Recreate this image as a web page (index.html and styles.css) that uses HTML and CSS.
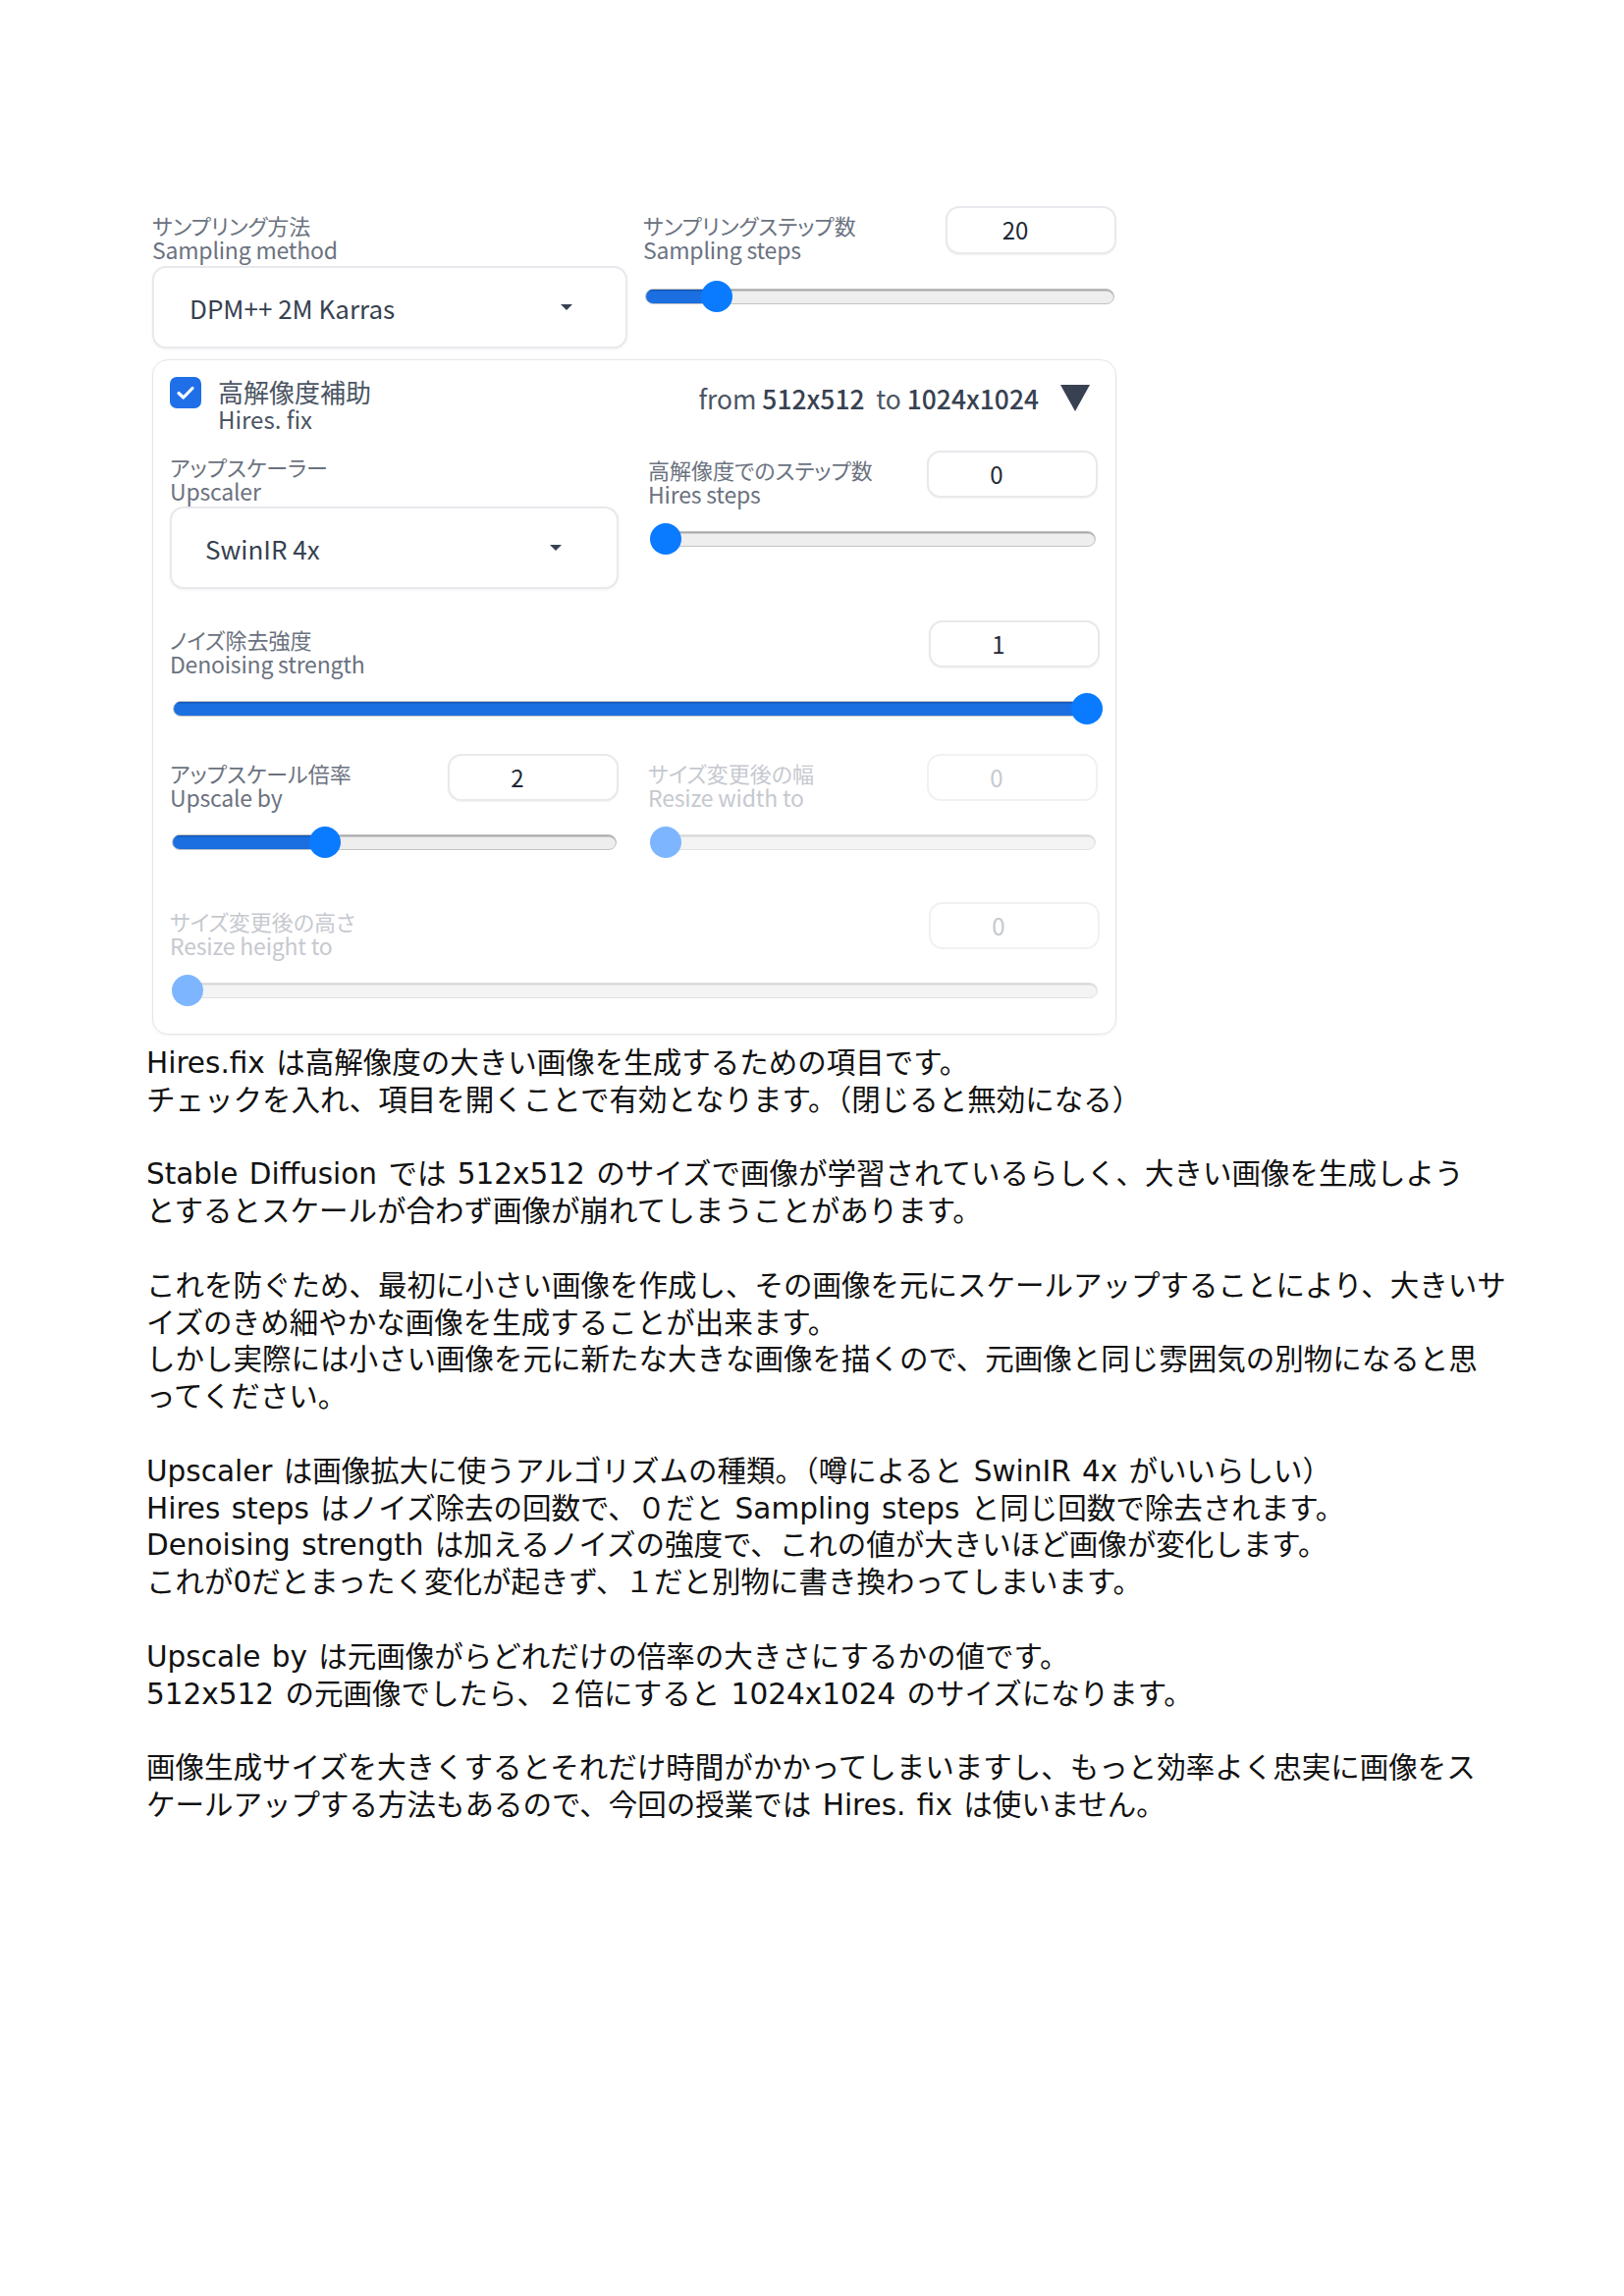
FILE: index.html
```html
<!DOCTYPE html>
<html lang="ja">
<head>
<meta charset="utf-8">
<title>Hires. fix</title>
<link rel="stylesheet" href="styles.css">
</head>
<body>
<div class="page">
  <div class="ui">
    <div class="top-row">
      <div class="col">
        <div class="label top-label">
          <span class="ja">サンプリング方法</span>
          <span class="en">Sampling method</span>
        </div>
        <div class="dropdown">
          <span class="dd-text">DPM++ 2M Karras</span>
          <svg class="dd-arrow" width="14" height="8" viewBox="0 0 14 8"><path d="M1 1 L13 1 L7 7 Z" fill="#374151"/></svg>
        </div>
      </div>
      <div class="col">
        <div class="field-head head-top">
          <div class="label">
            <span class="ja">サンプリングステップ数</span>
            <span class="en">Sampling steps</span>
          </div>
          <div class="num num-top">20</div>
        </div>
        <div class="slider" style="--p:0.1275">
          <div class="track"><div class="fill"></div></div>
          <div class="thumb"></div>
        </div>
      </div>
    </div>

    <div class="panel">
      <div class="panel-head">
        <div class="check">
          <div class="box">
            <svg width="20" height="16" viewBox="0 0 20 16"><path d="M3 8.5 L7.8 13 L17 3.5" fill="none" stroke="#fff" stroke-width="3.2" stroke-linecap="round" stroke-linejoin="round"/></svg>
          </div>
          <div class="check-label">
            <span class="ja">高解像度補助</span>
            <span class="en">Hires. fix</span>
          </div>
        </div>
        <div class="summary">
          <span class="sum-text">from <b>512x512</b>&nbsp; to <b>1024x1024</b></span>
          <svg class="expand" width="30" height="27" viewBox="0 0 30 27"><path d="M0 0 L30 0 L15 27 Z" fill="#374151"/></svg>
        </div>
      </div>

      <div class="grid row1">
        <div class="col">
          <div class="label up-label">
            <span class="ja">アップスケーラー</span>
            <span class="en">Upscaler</span>
          </div>
          <div class="dropdown dd-small">
            <span class="dd-text">SwinIR 4x</span>
            <svg class="dd-arrow" width="14" height="8" viewBox="0 0 14 8"><path d="M1 1 L13 1 L7 7 Z" fill="#374151"/></svg>
          </div>
        </div>
        <div class="col">
          <div class="field-head">
            <div class="label">
              <span class="ja">高解像度でのステップ数</span>
              <span class="en">Hires steps</span>
            </div>
            <div class="num">0</div>
          </div>
          <div class="slider" style="--p:0">
            <div class="track"><div class="fill"></div></div>
            <div class="thumb"></div>
          </div>
        </div>
      </div>

      <div class="field denoise">
        <div class="field-head">
          <div class="label">
            <span class="ja">ノイズ除去強度</span>
            <span class="en">Denoising strength</span>
          </div>
          <div class="num">1</div>
        </div>
        <div class="slider" style="--p:1">
          <div class="track"><div class="fill"></div></div>
          <div class="thumb"></div>
        </div>
      </div>

      <div class="grid row3">
        <div class="col">
          <div class="field-head">
            <div class="label">
              <span class="ja">アップスケール倍率</span>
              <span class="en">Upscale by</span>
            </div>
            <div class="num">2</div>
          </div>
          <div class="slider" style="--p:0.3333">
            <div class="track"><div class="fill"></div></div>
            <div class="thumb"></div>
          </div>
        </div>
        <div class="col disabled">
          <div class="field-head">
            <div class="label">
              <span class="ja">サイズ変更後の幅</span>
              <span class="en">Resize width to</span>
            </div>
            <div class="num">0</div>
          </div>
          <div class="slider" style="--p:0">
            <div class="track"><div class="fill"></div></div>
            <div class="thumb"></div>
          </div>
        </div>
      </div>

      <div class="field row4 disabled">
        <div class="field-head">
          <div class="label">
            <span class="ja">サイズ変更後の高さ</span>
            <span class="en">Resize height to</span>
          </div>
          <div class="num">0</div>
        </div>
        <div class="slider" style="--p:0">
          <div class="track"><div class="fill"></div></div>
          <div class="thumb"></div>
        </div>
      </div>
    </div>
  </div>

  <div class="text">
    <p>Hires.fix は高解像度の大きい画像を生成するための項目です。<br>チェックを入れ、項目を開くことで有効となります。（閉じると無効になる）</p>
    <p>Stable Diffusion では 512x512 のサイズで画像が学習されているらしく、大きい画像を生成しよう<br>とするとスケールが合わず画像が崩れてしまうことがあります。</p>
    <p>これを防ぐため、最初に小さい画像を作成し、その画像を元にスケールアップすることにより、大きいサ<br>イズのきめ細やかな画像を生成することが出来ます。<br>しかし実際には小さい画像を元に新たな大きな画像を描くので、元画像と同じ雰囲気の別物になると思<br>ってください。</p>
    <p>Upscaler は画像拡大に使うアルゴリズムの種類。（噂によると SwinIR 4x がいいらしい）<br>Hires steps はノイズ除去の回数で、０だと Sampling steps と同じ回数で除去されます。<br>Denoising strength は加えるノイズの強度で、これの値が大きいほど画像が変化します。<br>これが0だとまったく変化が起きず、１だと別物に書き換わってしまいます。</p>
    <p>Upscale by は元画像がらどれだけの倍率の大きさにするかの値です。<br>512x512 の元画像でしたら、２倍にすると 1024x1024 のサイズになります。</p>
    <p>画像生成サイズを大きくするとそれだけ時間がかかってしまいますし、もっと効率よく忠実に画像をス<br>ケールアップする方法もあるので、今回の授業では Hires. fix は使いません。</p>
  </div>
</div>
</body>
</html>
```
FILE: styles.css
```css
html, body {
  margin: 0;
  padding: 0;
  background: #ffffff;
}

.page {
  padding: 210px 0 0 149px;
  font-family: "Noto Sans CJK JP", "Noto Sans", sans-serif;
}

/* ---------- UI screenshot ---------- */
.ui {
  width: 982px;
  margin-left: 6px;
  font-feature-settings: "palt";
}

.top-row {
  display: grid;
  grid-template-columns: 484px 482px;
  column-gap: 16px;
  align-items: start;
}

.label {
  display: flex;
  flex-direction: column;
  color: #6b7280;
}
.label .ja {
  font-size: 22px;
  line-height: 25px;
}
.label .en {
  font-size: 23px;
  line-height: 25px;
  letter-spacing: -0.2px;
}

.top-label {
  margin-top: 7px;
}

.dropdown {
  display: flex;
  align-items: center;
  justify-content: space-between;
  box-sizing: border-box;
  height: 84px;
  margin-top: 4px;
  padding: 0 53px 0 36px;
  border: 2px solid #e8e9ec;
  border-radius: 14px;
  box-shadow: 0 1px 3px rgba(0, 0, 0, 0.06);
  background: #fff;
}
.dd-text {
  font-size: 26px;
  color: #374151;
}

.field-head {
  display: flex;
  justify-content: space-between;
  align-items: flex-start;
  height: 48px;
}
.head-top {
  height: 49px;
}
.field-head .label {
  margin-top: 7px;
}

.num {
  box-sizing: border-box;
  width: 174px;
  height: 48px;
  padding-right: 32px;
  border: 2px solid #e8e9ec;
  border-radius: 14px;
  box-shadow: 0 1px 2px rgba(0, 0, 0, 0.05);
  text-align: center;
  font-size: 24px;
  line-height: 44px;
  color: #1f2937;
  background: #fff;
}
.num-top {
  height: 49px;
}

/* slider */
.slider {
  position: relative;
  height: 32px;
  margin: 26px 2px 0;
}
.top-row .slider {
  margin-top: 27px;
}
.track {
  position: absolute;
  left: 0;
  right: 0;
  top: 8px;
  height: 16px;
  box-sizing: border-box;
  border-radius: 8px;
  background: #eeeeee;
  border: 1px solid #c3c3c3;
  box-shadow: inset 0 1.5px 0 #a8a8a8;
  overflow: hidden;
}
.fill {
  height: 100%;
  width: calc((100% - 32px) * var(--p) + 16px);
  background: #1b6fe0;
  box-shadow: inset 0 1.5px 0 #1759b8;
}
.thumb {
  position: absolute;
  top: 0;
  left: calc((100% - 32px) * var(--p));
  width: 32px;
  height: 32px;
  border-radius: 50%;
  background: #0a7bff;
}

/* panel */
.panel {
  margin-top: 11px;
  box-sizing: border-box;
  border: 1.5px solid #e3e5e9;
  border-radius: 16px;
  box-shadow: 0 1px 3px rgba(0, 0, 0, 0.06);
  padding: 17px 16px 28px 17px;
}

.panel-head {
  display: flex;
  justify-content: space-between;
  align-items: flex-start;
}
.check {
  display: flex;
  align-items: flex-start;
  gap: 17px;
}
.box {
  width: 32px;
  height: 32px;
  border-radius: 7px;
  background: #1f6fe8;
  display: flex;
  align-items: center;
  justify-content: center;
}
.check-label {
  display: flex;
  flex-direction: column;
  color: #4b5563;
}
.check-label .ja {
  font-size: 26px;
  line-height: 29px;
}
.check-label .en {
  font-size: 24px;
  line-height: 27px;
}

.summary {
  display: flex;
  align-items: center;
  gap: 22px;
  margin-top: 2px;
  margin-right: 10px;
}
.sum-text {
  font-size: 26.4px;
  color: #4b5563;
}
.sum-text b {
  font-weight: 500;
  color: #374151;
}

.grid {
  display: grid;
  grid-template-columns: 457px 458px;
  column-gap: 30px;
  align-items: start;
}
.row1 {
  margin-top: 19px;
}
.up-label {
  margin-top: 4px;
}
.dd-small {
  margin-top: 3px;
  padding: 0 55px 0 34px;
}

.denoise {
  margin-top: 32px;
}
.denoise .slider {
  margin-left: 3px;
  margin-right: -3px;
}
.row3 {
  margin-top: 30px;
}
.row4 {
  margin-top: 45px;
}

/* disabled fields */
.disabled .label {
  color: #c6c9cf;
}
.disabled .num {
  color: #c6c9cf;
  border-color: #f0f1f3;
  box-shadow: none;
}
.disabled .track {
  background: #f4f4f4;
  border-color: #e2e2e2;
  box-shadow: inset 0 1.5px 0 #d6d6d6;
}
.disabled .fill {
  background: #7db6ff;
  box-shadow: none;
}
.disabled .thumb {
  background: #7db6ff;
}

/* ---------- explanatory text ---------- */
.text {
  margin-top: 11px;
  font-family: "DejaVu Sans", "Noto Sans CJK JP", sans-serif;
  font-size: 29.5px;
  line-height: 37.8px;
  word-spacing: 2px;
  color: #111;
  white-space: nowrap;
}
.text p {
  margin: 0 0 37.8px;
}
```
